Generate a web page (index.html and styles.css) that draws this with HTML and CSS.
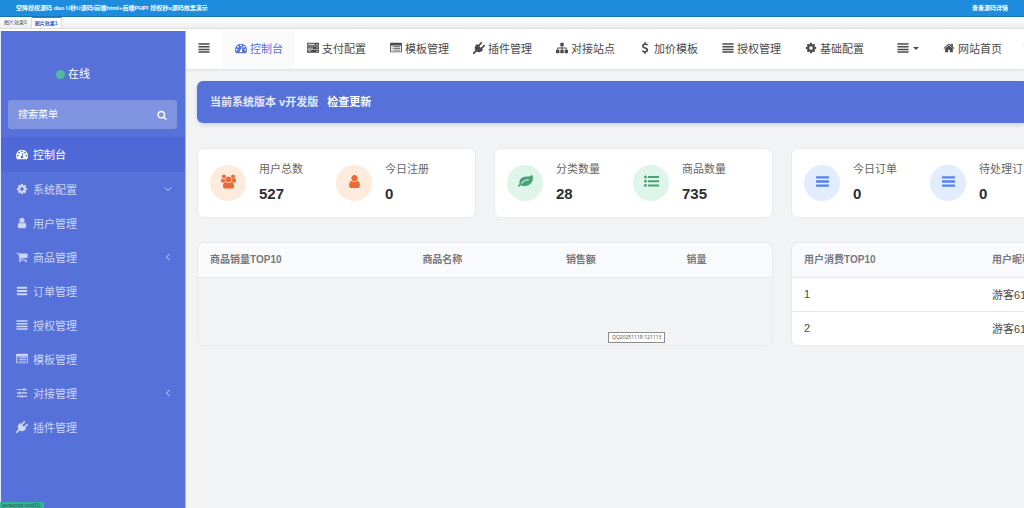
FILE: index.html
```html
<!DOCTYPE html>
<html lang="zh-CN">

<head>
    <meta charset="UTF-8">
    <meta name="viewport" content="width=device-width, initial-scale=1.0">
    <title>控制台</title>
    <link rel="stylesheet" href="styles.css">
</head>

<body>
    <svg class="sprite" aria-hidden="true">
        <symbol id="justify" viewBox="0 0 1792 1792">
            <path d="M64 192h1664v224H64zM64 592h1664v224H64zM64 992h1664v224H64zM64 1392h1664v224H64z"/>
        </symbol>
        <symbol id="bars" viewBox="0 0 1792 1792">
            <path d="M128 256h1536v288H128zM128 752h1536v288H128zM128 1248h1536v288H128z"/>
        </symbol>
        <symbol id="dashboard" viewBox="0 0 1792 1792">
            <path d="M384 1152q0-53-37.500-90.500t-90.500-37.500-90.500 37.500-37.500 90.500 37.500 90.500 90.500 37.500 90.500-37.500 37.500-90.500zm192-448q0-53-37.500-90.500t-90.500-37.500-90.500 37.500-37.500 90.500 37.500 90.500 90.500 37.500 90.500-37.500 37.500-90.500zm428 481l101-382q6-26-7.500-48.500t-38.500-29.500-48 6.500-30 39.500l-101 382q-60 5-107 43.500t-63 98.500q-20 77 20 146t117 89 146-20 89-117q16-60-6-117t-72-91zm660-33q0-53-37.500-90.500t-90.500-37.500-90.500 37.500-37.500 90.500 37.500 90.500 90.500 37.500 90.500-37.500 37.500-90.500zm-640-640q0-53-37.500-90.500t-90.500-37.500-90.500 37.500-37.500 90.500 37.500 90.500 90.500 37.500 90.500-37.500 37.500-90.500zm448 192q0-53-37.500-90.500t-90.500-37.500-90.500 37.500-37.500 90.500 37.500 90.500 90.500 37.500 90.500-37.500 37.500-90.500zm320 448q0 261-141 483-19 29-54 29h-1402q-35 0-54-29-141-221-141-483 0-182 71-348t191-286 286-191 348-71 348 71 286 191 191 286 71 348z"/>
        </symbol>
        <symbol id="server" viewBox="0 0 1792 1792">
            <path fill-rule="evenodd" d="M0 128h1792v448H0zM128 256v64h1024v-64zM128 384v64h1024v-64zM1408 352a96 96 0 1 0 192 0a96 96 0 1 0-192 0zM0 640h1792v448H0zM128 768v64h768v-64zM128 896v64h768v-64zM1408 864a96 96 0 1 0 192 0a96 96 0 1 0-192 0zM0 1152h1792v448H0zM128 1280v64h512v-64zM128 1408v64h512v-64zM1408 1376a96 96 0 1 0 192 0a96 96 0 1 0-192 0z"/>
        </symbol>
        <symbol id="list-alt" viewBox="0 0 1792 1792">
            <path fill-rule="evenodd" d="M160 128h1472q160 0 160 160v1088q0 160-160 160H160q-160 0-160-160V288q0-160 160-160zM128 512v864q0 32 32 32h1472q32 0 32-32V512zM256 640h128v128H256zM512 640h1024v128H512zM256 896h128v128H256zM512 896h1024v128H512zM256 1152h128v128H256zM512 1152h1024v128H512z"/>
        </symbol>
        <symbol id="plug" viewBox="0 0 1792 1792">
            <path d="M1755 453q37 38 37 90.500t-37 90.500l-401 400 150 150-160 160q-163 163-389.500 186.500t-411.500-100.500l-362 362h-181v-181l362-362q-124-185-100.500-411.500t186.500-389.500l160-160 150 150 400-401q38-37 91-37t90 37 37 90.500-37 90.500l-400 401 234 234 401-400q38-37 91-37t90 37z"/>
        </symbol>
        <symbol id="sitemap" viewBox="0 0 1792 1792">
            <path d="M1792 1248v320q0 40-28 68t-68 28h-320q-40 0-68-28t-28-68v-320q0-40 28-68t68-28h96v-192h-512v192h96q40 0 68 28t28 68v320q0 40-28 68t-68 28h-320q-40 0-68-28t-28-68v-320q0-40 28-68t68-28h96v-192h-512v192h96q40 0 68 28t28 68v320q0 40-28 68t-68 28h-320q-40 0-68-28t-28-68v-320q0-40 28-68t68-28h96v-192q0-52 38-90t90-38h512v-192h-96q-40 0-68-28t-28-68v-320q0-40 28-68t68-28h320q40 0 68 28t28 68v320q0 40-28 68t-68 28h-96v192h512q52 0 90 38t38 90v192h96q40 0 68 28t28 68z"/>
        </symbol>
        <symbol id="dollar" viewBox="0 0 1792 1792">
            <path d="M1362 1185q0 153-99.500 263.500t-258.500 136.500v175q0 14-9 23t-23 9h-135q-13 0-22.500-9.500t-9.500-22.500v-175q-66-9-127.500-31t-101.500-44.500-74-48-46.500-37.500-17.500-18q-17-21-2-41l103-135q7-10 23-12 15-2 24 9l2 2q113 99 243 125 37 8 74 8 81 0 142.500-43t61.500-122q0-28-15-53t-33.500-42-58.500-37.500-66-32-80-32.500q-39-16-61.500-25t-61.500-26.500-62.500-31-56.500-35.500-53.500-42.500-43.500-49-35.500-58-21-66.500-8.500-78q0-138 98-242t255-134v-180q0-13 9.500-22.500t22.500-9.500h135q14 0 23 9t9 23v176q57 6 110.500 23t87 33.500 63.500 37.500 39 29 15 14q17 18 5 38l-81 146q-8 15-23 16-14 3-27-7-3-3-14.500-12t-39-26.500-58.500-32-74.500-26-85.500-11.500q-95 0-155 43t-60 111q0 26 8.500 48t29.500 41.500 39.500 33 56 31 60.500 27 70 27.500q53 20 81 31.500t76 35 75.500 42.500 62 50 53 63.500 31.500 76.500 13 94z"/>
        </symbol>
        <symbol id="cog" viewBox="0 0 1792 1792">
            <path d="M1152 896q0-106-75-181t-181-75-181 75-75 181 75 181 181 75 181-75 75-181zm512-109v222q0 12-8 23t-20 13l-185 28q-19 54-39 91 35 50 107 138 10 12 10 25t-9 23q-27 37-99 108t-94 71q-12 0-26-9l-138-108q-44 23-91 38-16 136-29 186-7 28-36 28h-222q-14 0-24.500-8.500t-11.500-21.500l-28-184q-49-16-90-37l-141 107q-10 9-25 9-14 0-25-11-126-114-165-168-7-10-7-23 0-12 8-23 15-21 51-66.500t54-70.500q-27-50-41-99l-183-27q-13-2-21-12.500t-8-23.500v-222q0-12 8-23t19-13l186-28q14-46 39-92-40-57-107-138-10-12-10-24 0-10 9-23 26-36 98.500-107.500t94.500-71.500q13 0 26 10l138 107q44-23 91-38 16-136 29-186 7-28 36-28h222q14 0 24.500 8.500t11.500 21.500l28 184q49 16 90 37l142-107q9-9 24-9 13 0 25 10 129 119 165 170 7 8 7 22 0 12-8 23-15 21-51 66.500t-54 70.500q26 50 41 98l183 28q13 2 21 12.500t8 23.500z"/>
        </symbol>
        <symbol id="home" viewBox="0 0 1792 1792">
            <path d="M1472 992v480q0 26-19 45t-45 19h-384v-384h-256v384h-384q-26 0-45-19t-19-45v-480l1-6 575-474 575 474q1 2 1 6zm223-69l-62 74q-8 9-21 11h-3q-13 0-21-7l-692-577-692 577q-12 8-24 7-13-2-21-11l-62-74q-8-10-7-23.500t11-21.500l719-599q32-26 76-26t76 26l244 204v-195q0-14 9-23t23-9h192q14 0 23 9t9 23v408l219 182q10 8 11 21.500t-7 23.500z"/>
        </symbol>
        <symbol id="trash" viewBox="0 0 1792 1792">
            <path d="M640 128h512l64 192h384v160H192V320h384zM320 576h1152l-64 1088H384z"/>
        </symbol>
        <symbol id="search" viewBox="0 0 1792 1792">
            <path d="M1216 832q0-185-131.500-316.500t-316.500-131.500-316.500 131.500-131.500 316.500 131.500 316.500 316.500 131.500 316.500-131.500 131.500-316.500zm512 832q0 52-38 90t-90 38q-54 0-90-38l-343-342q-179 124-399 124-143 0-273.500-55.500t-225-150-150-225-55.500-273.500 55.500-273.500 150-225 225-150 273.500-55.500 273.500 55.500 225 150 150 225 55.500 273.500q0 220-124 399l343 343q37 37 37 90z"/>
        </symbol>
        <symbol id="user" viewBox="0 0 1792 1792">
            <path d="M1536 1399q0 109-62.500 187t-150.500 78h-854q-88 0-150.500-78t-62.500-187q0-85 8.500-160.500t31.500-152 58.500-131 94-89 134.500-34.500q131 128 313 128t313-128q76 0 134.500 34.500t94 89 58.500 131 31.500 152 8.500 160.500zm-256-887q0 159-112.500 271.500t-271.500 112.500-271.500-112.500-112.500-271.500 112.500-271.500 271.500-112.500 271.500 112.500 112.500 271.500z"/>
        </symbol>
        <symbol id="users" viewBox="-64 0 1920 1792">
            <path d="M529 896q-162 5-265 128h-134q-82 0-138-40.500t-56-118.500q0-353 124-353 6 0 43.500 21t97.500 42.500 119 21.500q67 0 133-23-5 37-5 66 0 159 90 294zm1071 637q0 120-73 189.500t-194 69.500h-874q-121 0-194-69.500t-73-189.500q0-53 3.500-103.500t14-109 26.500-108.500 43-97.500 62-81 85.500-53.500 111.500-20q10 0 43 21.500t73 48 107 48 135 21.500 135-21.500 107-48 73-48 43-21.500q61 0 111.500 20t85.500 53.500 62 81 43 97.500 26.500 108.500 14 109 3.500 103.500zm-1024-1277q0 106-75 181t-181 75-181-75-75-181 75-181 181-75 181 75 75 181zm704 384q0 159-112.500 271.500t-271.500 112.500-271.500-112.500-112.500-271.500 112.500-271.500 271.500-112.500 271.500 112.500 112.500 271.500zm576 225q0 78-56 118.500t-138 40.500h-134q-103-123-265-128 90-135 90-294 0-29-5-66 66 23 133 23 59 0 119-21.500t97.500-42.500 43.500-21q124 0 124 353zm-128-609q0 106-75 181t-181 75-181-75-75-181 75-181 181-75 181 75 75 181z"/>
        </symbol>
        <symbol id="cart" viewBox="0 0 1792 1792">
            <path d="M704 1536q0 52-38 90t-90 38-90-38-38-90 38-90 90-38 90 38 38 90zm896 0q0 52-38 90t-90 38-90-38-38-90 38-90 90-38 90 38 38 90zm128-1088v512q0 24-16.500 42.500t-40.500 21.500l-1044 122q13 60 13 70 0 16-24 64h920q26 0 45 19t19 45-19 45-45 19h-1024q-26 0-45-19t-19-45q0-11 8-31.500t16-36 21.500-40 15.500-29.500l-177-823h-204q-26 0-45-19t-19-45 19-45 45-19h256q16 0 28.500 6.500t19.500 15.500 13 24.500 8 26 5.500 29.500 4.500 26h1201q26 0 45 19t19 45z"/>
        </symbol>
        <symbol id="sliders" viewBox="0 0 1792 1792">
            <path d="M128 288h896v176H128zM1408 288h256v176h-256zM1056 192h288v368h-288zM128 800h256v176H128zM768 800h896v176H768zM416 704h288v368H416zM128 1312h640v176H128zM1152 1312h512v176h-512zM800 1216h288v368H800z"/>
        </symbol>
        <symbol id="leaf" viewBox="0 0 1792 1792">
            <path d="M1280 704q0-26-19-45t-45-19q-172 0-318 49.500t-259.500 134-235.500 219.500q-19 21-19 45 0 26 19 45t45 19q24 0 45-19 27-24 74-71t67-66q137-124 268.500-176t313.500-52q26 0 45-19t19-45zm512-198q0 95-20 193-46 224-184.500 383t-357.500 268q-214 108-438 108-148 0-286-47-15-5-88-42t-96-37q-16 0-39.500 32t-45 70-52.500 70-60 32q-43 0-63.500-17.500t-45.500-59.500q-2-4-6-11t-5.500-10-3-9.500-1.500-13.500q0-35 31-73.500t68-65.500 68-56 31-48q0-4-14-38t-16-44q-9-51-9-104 0-115 43.500-220t119-184.500 170.500-139 204-95.500q55-18 145-25.500t179.500-9 178.500-6 163.500-24 113.500-56.500l29.500-29.500 29.500-28 27-20 36.500-16 43.500-4.500q39 0 70.500 46t47.500 112 24 124 8 96z"/>
        </symbol>
        <symbol id="list" viewBox="0 0 1792 1792">
            <path d="M0 352a176 176 0 1 0 352 0a176 176 0 1 0-352 0zM0 864a176 176 0 1 0 352 0a176 176 0 1 0-352 0zM0 1376a176 176 0 1 0 352 0a176 176 0 1 0-352 0zM480 240h1312v224H480zM480 752h1312v224H480zM480 1264h1312v224H480z"/>
        </symbol>
        <symbol id="angle" viewBox="0 0 8 8">
            <path d="M1 2.500l3 3 3-3" fill="none" stroke="currentColor"/>
        </symbol>
    </svg>

    <header class="titlebar">
        <h1>空降授权源码 dao U秒U源码/前端html+后端PHP/ 授权秒u源码效果演示</h1>
        <a href="#">查看源码详情</a>
    </header>
    <nav class="tabs">
        <a href="#">图片效果0</a>
        <a href="#" class="active">图片效果1</a>
    </nav>

    <div class="app">
        <aside class="sidebar">
            <p class="status"><span class="dot"></span>在线</p>
            <form class="search">
                <input type="text" placeholder="搜索菜单" aria-label="搜索菜单">
                <button type="button" aria-label="搜索"><svg class="icon"><use href="#search"/></svg></button>
            </form>
            <nav class="menu">
                <a href="#" class="active"><svg class="icon"><use href="#dashboard"/></svg>控制台</a>
                <a href="#"><svg class="icon"><use href="#cog"/></svg>系统配置<svg class="arrow"><use href="#angle"/></svg></a>
                <a href="#"><svg class="icon"><use href="#user"/></svg>用户管理</a>
                <a href="#"><svg class="icon"><use href="#cart"/></svg>商品管理<svg class="arrow left"><use href="#angle"/></svg></a>
                <a href="#"><svg class="icon"><use href="#bars"/></svg>订单管理</a>
                <a href="#"><svg class="icon"><use href="#justify"/></svg>授权管理</a>
                <a href="#"><svg class="icon"><use href="#list-alt"/></svg>模板管理</a>
                <a href="#"><svg class="icon"><use href="#sliders"/></svg>对接管理<svg class="arrow left"><use href="#angle"/></svg></a>
                <a href="#"><svg class="icon"><use href="#plug"/></svg>插件管理</a>
            </nav>
        </aside>

        <div class="content">
            <nav class="navbar">
                <button type="button" class="toggle" aria-label="菜单"><svg class="icon"><use href="#justify"/></svg></button>
                <a href="#" class="active"><svg class="icon"><use href="#dashboard"/></svg>控制台</a>
                <a href="#"><svg class="icon"><use href="#server"/></svg>支付配置</a>
                <a href="#"><svg class="icon"><use href="#list-alt"/></svg>模板管理</a>
                <a href="#"><svg class="icon"><use href="#plug"/></svg>插件管理</a>
                <a href="#"><svg class="icon"><use href="#sitemap"/></svg>对接站点</a>
                <a href="#"><svg class="icon"><use href="#dollar"/></svg>加价模板</a>
                <a href="#"><svg class="icon"><use href="#justify"/></svg>授权管理</a>
                <a href="#"><svg class="icon"><use href="#cog"/></svg>基础配置</a>
                <button type="button" class="more" aria-label="更多"><svg class="icon"><use href="#justify"/></svg><span class="caret"></span></button>
                <a href="#"><svg class="icon"><use href="#home"/></svg>网站首页</a>
                <a href="#" class="clear" aria-label="清除缓存"><svg class="icon"><use href="#trash"/></svg></a>
            </nav>

            <main class="main">
                <section class="notice">当前系统版本 v开发版 <a href="#">检查更新</a></section>

                <section class="cards">
                    <div class="card orange">
                        <div class="stat">
                            <span class="circle"><svg class="icon"><use href="#users"/></svg></span>
                            <p>用户总数<b>527</b></p>
                        </div>
                        <div class="stat">
                            <span class="circle"><svg class="icon"><use href="#user"/></svg></span>
                            <p>今日注册<b>0</b></p>
                        </div>
                    </div>
                    <div class="card green">
                        <div class="stat">
                            <span class="circle"><svg class="icon"><use href="#leaf"/></svg></span>
                            <p>分类数量<b>28</b></p>
                        </div>
                        <div class="stat">
                            <span class="circle"><svg class="icon"><use href="#list"/></svg></span>
                            <p>商品数量<b>735</b></p>
                        </div>
                    </div>
                    <div class="card blue">
                        <div class="stat">
                            <span class="circle"><svg class="icon"><use href="#bars"/></svg></span>
                            <p>今日订单<b>0</b></p>
                        </div>
                        <div class="stat">
                            <span class="circle"><svg class="icon"><use href="#bars"/></svg></span>
                            <p>待处理订单<b>0</b></p>
                        </div>
                    </div>
                </section>

                <section class="tables">
                    <div class="panel">
                        <table class="goods">
                            <thead>
                                <tr><th>商品销量TOP10</th><th>商品名称</th><th>销售额</th><th>销量</th></tr>
                            </thead>
                        </table>
                    </div>
                    <div class="panel">
                        <table class="spend">
                            <thead>
                                <tr><th>用户消费TOP10</th><th>用户昵称</th></tr>
                            </thead>
                            <tbody>
                                <tr><td>1</td><td>游客61</td></tr>
                                <tr><td>2</td><td>游客61</td></tr>
                            </tbody>
                        </table>
                    </div>
                </section>
            </main>
        </div>
    </div>

    <div class="tooltip">QQ20251118-121113</div>
    <div class="link-status">javascript:void(0);</div>
</body>

</html>
```
FILE: styles.css
```css
* {
    box-sizing: border-box;
}

body {
    margin: 0;
    height: 100vh;
    display: flex;
    flex-direction: column;
    font-family: "Liberation Sans", "Noto Sans CJK SC", sans-serif;
    font-size: 11px;
    color: #4a4a4a;
    background: #fff;
    overflow: hidden;
}

a {
    color: inherit;
    text-decoration: none;
}

button {
    padding: 0;
    border: none;
    background: none;
    color: inherit;
    font: inherit;
    cursor: pointer;
}

p {
    margin: 0;
}

.sprite {
    display: none;
}

.icon {
    width: 12px;
    height: 12px;
    flex: none;
    fill: currentColor;
}

/* title bar and tabs */
.titlebar {
    flex: none;
    height: 17px;
    padding: 0 16px;
    display: flex;
    align-items: center;
    justify-content: space-between;
    background: #1e8bdc;
    border-bottom: 1px solid #1874b8;
    color: #fff;
    font-family: "Liberation Sans", "Noto Sans CJK SC", sans-serif;
    font-size: 6px;
    font-weight: bold;
    line-height: 12px;
}

.titlebar h1 {
    margin: 0;
    font-size: inherit;
}

.tabs {
    flex: none;
    height: 12px;
    display: flex;
    background: linear-gradient(#fff, #eee);
    border-bottom: 1px solid #ddd;
    font-size: 5px;
    line-height: 11px;
}

.tabs a {
    padding: 0 4px;
    border-right: 1px solid #ddd;
}

.tabs .active {
    padding: 0 3px;
    border-top: 1px solid #1e8bdc;
    background: #fff;
    color: #2a62d0;
    font-weight: bold;
}

.app {
    flex: 1;
    min-height: 0;
    margin-top: 2px;
    display: flex;
}

/* sidebar */
.sidebar {
    flex: none;
    width: 186px;
    border-left: 1px solid #e4e8f8;
    border-right: 1px solid #a9b7ea;
    background: #5671d9;
    color: #fff;
}

.status {
    height: 69px;
    padding: 17px 0 0 55px;
    display: flex;
    align-items: center;
    gap: 3px;
    line-height: 18px;
}

.dot {
    width: 9px;
    height: 9px;
    border-radius: 50%;
    background: #53b89c;
}

.search {
    height: 29px;
    margin: 0 8px 8px 7px;
    padding: 0 10px;
    display: flex;
    align-items: center;
    border-radius: 3px;
    background: #7f93e1;
}

.search input {
    flex: 1;
    min-width: 0;
    padding: 0;
    border: none;
    outline: none;
    background: none;
    color: #fff;
    font: inherit;
    font-size: 10px;
}

.search input::placeholder {
    color: #fff;
}

.search button {
    display: flex;
}

.search .icon {
    width: 10px;
    height: 10px;
}

.menu a {
    height: 34px;
    padding: 0 13px 0 15px;
    display: flex;
    align-items: center;
    gap: 5px;
    color: #cdd6f8;
}

.menu .active {
    height: 35px;
    padding-bottom: 2px;
    background: #4e69d5;
    color: #fff;
}

.arrow {
    width: 8px;
    height: 8px;
    margin-left: auto;
}

.arrow.left {
    transform: rotate(90deg);
}

/* top navigation */
.content {
    flex: 1;
    min-width: 0;
    display: flex;
    flex-direction: column;
    background: #f2f3f5;
    overflow: hidden;
}

.navbar {
    flex: none;
    height: 38px;
    display: flex;
    background: #fff;
    box-shadow: 0 1px 2px #ddd;
    white-space: nowrap;
}

.navbar > * {
    flex: none;
    padding: 0 12px 4px;
    display: flex;
    align-items: center;
    gap: 3px;
}

.navbar .toggle {
    padding-right: 13px;
}

.navbar .active {
    background: #fafafa;
    color: #5671d9;
}

.navbar .more {
    padding-left: 21px;
    gap: 4px;
}

.navbar .clear {
    padding-left: 8px;
    color: #e6c35c;
}

.caret {
    border: 3px solid transparent;
    border-top-color: #4a4a4a;
    border-bottom: none;
}

/* dashboard */
.main {
    padding: 12px 0 0 11px;
}

.notice {
    height: 42px;
    padding: 0 13px;
    display: flex;
    align-items: center;
    gap: 9px;
    border-radius: 6px 0 0 6px;
    background: #5671d9;
    box-shadow: 0 2px 4px #cfd3dd;
    color: #e4e9fc;
    font-size: 11px;
    font-weight: bold;
    line-height: 16px;
}

.notice a {
    color: #fff;
}

.cards {
    margin-top: 25px;
    display: flex;
    gap: 18px;
}

.card {
    flex: none;
    width: 279px;
    height: 70px;
    padding: 0 12px;
    display: flex;
    align-items: center;
    border: 1px solid #e9ebee;
    border-radius: 7px;
    background: #fff;
}

.stat {
    flex: none;
    width: 126px;
    display: flex;
    align-items: center;
    gap: 13px;
    color: #666;
    line-height: 18px;
    white-space: nowrap;
}

.stat p {
    padding-bottom: 3px;
}

.stat b {
    display: block;
    padding-top: 7px;
    color: #2c2e38;
    font-size: 15px;
}

.circle {
    width: 36px;
    height: 36px;
    padding-bottom: 3px;
    display: flex;
    align-items: center;
    justify-content: center;
    border-radius: 50%;
}

.circle .icon {
    width: 15px;
    height: 15px;
}

.orange .circle {
    background: #fdebdd;
    color: #ee6a35;
}

.green .circle {
    background: #e0f5ea;
    color: #48a478;
}

.blue .circle {
    background: #e1edfc;
    color: #5582f0;
}

.tables {
    margin-top: 24px;
    display: flex;
    gap: 18px;
}

.panel {
    flex: none;
    width: 576px;
    border: 1px solid #e6e8eb;
    border-radius: 7px;
    overflow: hidden;
}

table {
    width: 100%;
    border-collapse: collapse;
    table-layout: fixed;
    text-align: left;
}

th,
td {
    height: 34px;
    padding: 0 12px;
    border-bottom: 1px solid #e6e8eb;
}

th {
    padding-bottom: 2px;
    background: #f9fafc;
    color: #77797c;
    font-size: 10px;
}

td {
    background: #fff;
}

tbody tr:last-child td {
    border-bottom: none;
}

.goods th:nth-child(1) {
    width: 37%;
}

.goods th:nth-child(2) {
    width: 25%;
}

.goods th:nth-child(3) {
    width: 21%;
}

.spend th:first-child {
    width: 188px;
}

/* overlays */
.tooltip {
    position: absolute;
    top: 332px;
    left: 608px;
    padding: 0 3px;
    border: 1px solid #8c8c8c;
    background: #fff;
    font-family: "Open Sans", sans-serif;
    font-size: 5px;
    line-height: 9px;
}

.link-status {
    position: absolute;
    bottom: 0;
    left: 0;
    padding: 0 3px 0 2px;
    background: #36b39b;
    color: #1d5a50;
    font-size: 5px;
    line-height: 6px;
}
```
